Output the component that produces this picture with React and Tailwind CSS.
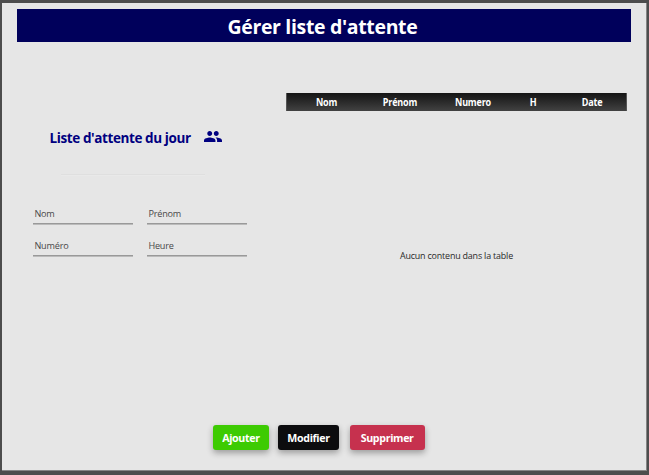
const columns = [
  { label: 'Nom', width: 'w-[79px]' },
  { label: 'Prénom', width: 'w-[68px]' },
  { label: 'Numero', width: 'w-[78px]' },
  { label: 'H', width: 'w-[42px]' },
  { label: 'Date', width: 'w-[76px]' },
];

const fields = ['Nom', 'Prénom', 'Numéro', 'Heure'];

const buttons = [
  { label: 'Ajouter', style: 'w-14 bg-[#3dcb02]' },
  { label: 'Modifier', style: 'ml-[9px] w-[61px] bg-[#0c0c0e]' },
  { label: 'Supprimer', style: 'ml-[11px] w-[75px] bg-[#c6314e]' },
];

function PeopleIcon() {
  return (
    <svg viewBox="0 0 22 14" className="mb-[3px] h-[11.500px] w-[18px] fill-[#000080]" preserveAspectRatio="none">
      <path d="M15 6c1.660 0 2.990-1.340 2.990-3S16.660 0 15 0s-3 1.340-3 3 1.340 3 3 3zM7 6c1.660 0 2.990-1.340 2.990-3S8.660 0 7 0 4 1.340 4 3s1.340 3 3 3zM7 8c-2.330 0-7 1.170-7 3.500V14h14v-2.500C14 9.170 9.330 8 7 8zM15 8c-.29 0-.62.020-.97.050 1.160.84 1.970 1.970 1.970 3.450V14h6v-2.500C22 9.170 17.330 8 15 8z" />
    </svg>
  );
}

export default function App() {
  return (
    <div className="h-[475px] w-[649px] overflow-hidden bg-[#4d4d4d] pt-[3px] pl-[2px] font-['Open_Sans','Noto_Sans',sans-serif]">
      <main className="flex h-[468px] w-[645px] flex-col border-r border-b border-[#858585] bg-[#e6e6e6] pt-[6px]">
        <h1 className="ml-[15px] flex h-[33px] w-[614px] items-center justify-center bg-[#00005b] pt-[3px] pr-[3px] text-[20px] leading-[30px] font-bold whitespace-nowrap text-white">
          <span className="inline-block scale-x-[0.975] tracking-[-0.35px]">Gérer liste d'attente</span>
        </h1>

        <div className="flex h-[383px]">
          <section className="w-[284px] shrink-0 pt-[86px] pl-[31px]">
            <div className="ml-4 flex h-5 items-center">
              <h2 className="w-[155px] pl-[0.500px] text-[13.500px] font-bold tracking-[-0.4px] whitespace-nowrap text-[#000080]">
                Liste d'attente du jour
              </h2>
              <PeopleIcon />
            </div>
            <div className="mt-[26px] ml-7 h-[2px] w-36 border-t border-[#dfdfdf] bg-[#e9e9e9]" />
            <div className="mt-7 grid w-[214px] grid-cols-[100px_100px] gap-x-[14px]">
              {fields.map((label) => (
                <label key={label} className="flex h-8 flex-col">
                  <span className="h-[19px] origin-left scale-x-[0.94] pl-[1.500px] text-[9.700px] leading-[19px] tracking-[-0.2px] text-[#484848]">{label}</span>
                  <span className="h-[2px] border-b border-[#bbbbbb] bg-[#999999]" />
                </label>
              ))}
            </div>
          </section>

          <section className="pt-[51px]">
            <div className="flex h-[18px] w-[341px] items-center border-x border-[#555] bg-linear-to-b from-[#151515] to-[#424242] pt-[2px] text-[9.800px] leading-4 font-bold text-white">
              {columns.map((column) => (
                <span key={column.label} className={`${column.width} shrink-0 scale-x-[0.92] text-center tracking-[-0.2px]`}>
                  {column.label}
                </span>
              ))}
            </div>
            <p className="mt-[137px] w-[341px] scale-x-[0.92] text-center text-[9.700px] leading-4 tracking-[-0.2px] text-[#292929]">
              Aucun contenu dans la table
            </p>
          </section>
        </div>

        <footer className="flex pl-[211px]">
          {buttons.map((button) => (
            <button
              key={button.label}
              className={`${button.style} flex h-[25px] items-center justify-center rounded-[3px] text-[11.300px] leading-4 font-bold text-white shadow-[0_3px_6px_rgba(0,0,0,0.32)]`}
            >
              <span className="inline-block scale-x-[0.94] pt-px tracking-[-0.35px]">{button.label}</span>
            </button>
          ))}
        </footer>
      </main>
    </div>
  );
}
